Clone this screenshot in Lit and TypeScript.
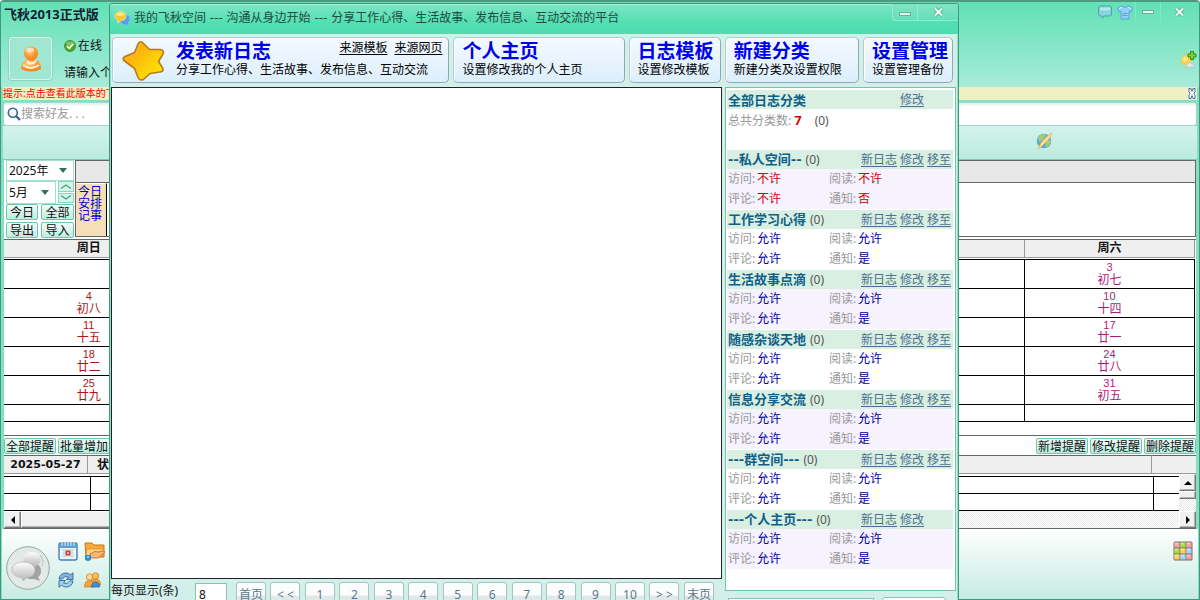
import { LitElement, html, css, svg, nothing } from "lit";
import { customElement, property } from "lit/decorators.js";
import { classMap } from "lit/directives/class-map.js";

const base = css`
  *, *::before, *::after { box-sizing: border-box; }
  :host {
    font: 12px/16px "Noto Sans", "Noto Sans CJK SC", sans-serif;
    color: #111;
  }
  button, input, select { font: inherit; color: inherit; margin: 0; padding: 0; border: 0; background: none; border-radius: 0; }
  button { white-space: nowrap; cursor: pointer; }
  svg { display: block; flex: none; }
  p, h1, h2 { margin: 0; font: inherit; }
`;

const starIcon = svg`<svg width="44" height="43" viewBox="0 0 44 43">
  <defs><linearGradient id="st" x1="0" y1="0" x2="1" y2="1"><stop offset="0" stop-color="#f99a08"/><stop offset=".5" stop-color="#ffc40c"/><stop offset="1" stop-color="#fff200"/></linearGradient></defs>
  <path d="M17.500 4Q19.500 1.500 22 4L28.500 10.500L39.500 10.500Q43.500 11.500 42 15L37.500 22.500L42 29.500Q42.500 33 38.500 33L29 34.500L22.500 40.500Q18.500 42 17 38.500L13.500 29.500L3 21.500Q1 19 4 17.500L13.500 13.500Z" fill="url(#st)" stroke="#b97a1a" stroke-width="1.600" stroke-linejoin="round"/>
  <path d="M19 5.500L15.500 15.500L5 19.500" fill="none" stroke="#ffb52e" stroke-width="1.800" stroke-linecap="round" stroke-linejoin="round"/></svg>`;

const bubblesIcon = svg`<svg width="17" height="16" viewBox="0 0 17 16">
  <path d="M12 4.500a4.500 4.500 0 0 1 2.500 8L15 15.500L11.500 14.800A5 4.500 0 0 1 6 11Z" fill="#4fa4ea" stroke="#8cc9f5" stroke-width=".8"/>
  <path d="M6.500 1.500c3.300 0 5.500 2 5.500 4.600s-2.200 4.700-5.500 4.700L3.500 13l.3-2.800C2 9.300 1 7.900 1 6.100C1 3.500 3.300 1.500 6.500 1.500Z" fill="#fbc52e" stroke="#e9e6a0" stroke-width=".8"/>
  <ellipse cx="6.500" cy="4.300" rx="3.600" ry="1.800" fill="#ffe999"/></svg>`;

const avatarIcon = svg`<svg width="24" height="28" viewBox="0 0 24 28">
  <defs><radialGradient id="av" cx=".4" cy=".3" r=".8"><stop offset="0" stop-color="#ffd9a0"/><stop offset=".5" stop-color="#ff9a2e"/><stop offset="1" stop-color="#f07818"/></radialGradient></defs>
  <path d="M2 24Q2 17 8 15L16 15Q22 17 22 24Q12 29 2 24Z" fill="url(#av)"/>
  <path d="M4 20Q12 26 20 20M8 16Q12 21 17 16" fill="none" stroke="#fff1df" stroke-width="1.800"/>
  <circle cx="12" cy="8.500" r="7" fill="url(#av)"/><ellipse cx="11" cy="5" rx="4" ry="2.200" fill="#ffe9c8" opacity=".8"/></svg>`;

const okIcon = svg`<svg width="12" height="12" viewBox="0 0 12 12"><circle cx="6" cy="6" r="5.500" fill="#4fa52c" stroke="#3a8a30" stroke-width=".8"/><ellipse cx="6" cy="3.500" rx="3.800" ry="2" fill="#9ad36a" opacity=".7"/><path d="M3 6.200L5.300 8.400L9.200 4" fill="none" stroke="#fff" stroke-width="1.700"/></svg>`;

const searchIcon = svg`<svg width="14" height="14" viewBox="0 0 14 14"><circle cx="5.800" cy="5.800" r="4.500" fill="#f4fafc" stroke="#35648f" stroke-width="1.600"/><path d="M9 9L13 13" stroke="#2f5c86" stroke-width="2.200"/></svg>`;

const bubbleIcon = svg`<svg width="14" height="14" viewBox="0 0 14 14"><path d="M2.500 1h9q2 0 2 2v6q0 2-2 2H6L4.500 13.300L3.500 11H2.500q-2 0-2-2V3q0-2 2-2Z" fill="#86d3dd" stroke="#4f9fae"/><path d="M2 2.500h10v3H2z" fill="#c2eef2" opacity=".7"/></svg>`;

const shirtIcon = svg`<svg width="16" height="15" viewBox="0 0 16 15"><path d="M5 1Q8 4 11 1L15.500 3L14 7L12 6V14H4V6L2 7L.5 3Z" fill="#8fd0f6" stroke="#5aa2d8"/><path d="M2 3.500L5 2.300M14 3.500L11 2.300" stroke="#e8f7ff"/><path d="M5.500 8.500h5M5.500 10.500h5" stroke="#5d9fd0"/></svg>`;

const closeIcon = svg`<svg width="11" height="10" viewBox="0 0 11 10"><path d="M2 1.500L9 8.500M9 1.500L2 8.500" stroke="#4c9f85" stroke-width="3.600"/><path d="M2 1.500L9 8.500M9 1.500L2 8.500" stroke="#edfbf5" stroke-width="2.200"/></svg>`;

const minIcon = svg`<svg width="12" height="4" viewBox="0 0 12 4"><rect x=".5" y=".5" width="11" height="3" fill="#e6f7f0" stroke="#6fae99"/></svg>`;

const weatherIcon = svg`<svg width="19" height="19" viewBox="0 0 19 19"><path d="M8 2v3M8 15v3M1 10h3M3 5l2 2M3 15l2-2M13 15l1 2" stroke="#e8c54a"/><circle cx="8.500" cy="10.500" r="5" fill="#fbd04a"/><circle cx="7.500" cy="9" r="2.500" fill="#ffe58a"/><path d="M8 17q-1-3 2-3q2-3 4 0q3 0 2 3Z" fill="#e6e9ea" stroke="#b3bcbe" stroke-width=".6"/><path d="M12.500 1.500h3v2.500h2.500v3h-2.500v2.500h-3v-2.500H10V4h2.500Z" fill="#7dcf2f" stroke="#2f8a1a"/></svg>`;

const globeIcon = svg`<svg width="17" height="18" viewBox="0 0 17 18"><circle cx="8" cy="9" r="7.300" fill="#5ea8d8"/><path d="M2.500 5Q6 1 10 2.500L8 6L4 10Q1.500 8 2.500 5ZM11 9L15 8Q15 13 10 15.500Q8.500 12 11 9Z" fill="#a3cf72"/><path d="M2.500 17Q4 9 15.500 1Q16.500 3 11 9Q6 14 2.500 17Z" fill="#ffe0a0" stroke="#f0b24c" stroke-width=".8"/></svg>`;

const chatIcon = svg`<svg width="44" height="46" viewBox="0 0 44 46">
  <defs><linearGradient id="cg" x1="0" y1="0" x2="0" y2="1"><stop offset="0" stop-color="#fff"/><stop offset="1" stop-color="#b4b4b4"/></linearGradient></defs>
  <circle cx="22" cy="23" r="21.300" fill="#e2eae8" stroke="#9aa5a1"/>
  <path d="M27 17q8 2 8 9q0 4-3 6l2 4-6-2q-9 1-12-5Z" fill="#a2a2a2"/>
  <ellipse cx="26" cy="14.500" rx="9" ry="7.500" fill="url(#cg)"/>
  <path d="M17 17c7 0 12 3.500 12 8s-4 7.500-9 7.800L17.500 36L15 32.500C9 31.500 6 28.500 6 25C6 20.500 10 17 17 17Z" fill="url(#cg)" stroke="#b5b5b5" stroke-width=".8"/>
  <path d="M34 10q5 5 2 11" fill="none" stroke="#c9d0ce" stroke-width="1.500"/></svg>`;

const calendarIcon = svg`<svg width="20" height="20" viewBox="0 0 20 20"><rect x="1" y="2" width="18" height="17" rx="2" fill="#eef6fc" stroke="#3f7fb4" stroke-width="1.400"/><path d="M1 3h18v4H1z" fill="#5b9fd6"/><path d="M4 1v4M7 1v4M10 1v4M13 1v4M16 1v4" stroke="#dff0fb"/><path d="M4 9h12M4 12h12M4 15h12M6 8v9M14 8v9" stroke="#bdd6ea"/><rect x="7.500" y="9.500" width="5" height="5" fill="#d23b2e"/><rect x="9.200" y="11.200" width="1.600" height="1.600" fill="#fff"/></svg>`;

const folderIcon = svg`<svg width="22" height="20" viewBox="0 0 22 20"><path d="M1 2h7l2 2h10v12H2Z" fill="#f6a93d" stroke="#c97813"/><path d="M3 8h17l-3 8H2Z" fill="#ffd27c" stroke="#dd8f2a" stroke-width=".8"/><path d="M6 13q5-4 8-2l6-1q2 1-1 3l-5 4H7Z" fill="#f9b478" stroke="#c06a20" stroke-width=".8"/><path d="M1 14h6v5q-3 2-6 0Z" fill="#2f8fd6"/><path d="M3 16h2" stroke="#fff"/></svg>`;

const syncIcon = svg`<svg width="16" height="16" viewBox="0 0 16 16"><path d="M1 7Q2 1 8 1Q10.500 1 12.500 2.800L15 .8V7.500H8.500L10.500 5Q6.500 3 4.500 7Z" fill="#7fb6e2" stroke="#2f6496" stroke-width=".9"/><path d="M15 9Q14 15 8 15Q5.500 15 3.500 13.200L1 15.200V8.500H7.500L5.500 11Q9.500 13 11.500 9Z" fill="#a6cfee" stroke="#2f6496" stroke-width=".9"/></svg>`;

const usersIcon = svg`<svg width="17" height="16" viewBox="0 0 17 16"><circle cx="11.500" cy="4" r="3.200" fill="#ffbe57" stroke="#c77912" stroke-width=".7"/><path d="M6.500 13q0-6 5-6t5 6Z" fill="#f5a02a" stroke="#c77912" stroke-width=".7"/><circle cx="5.500" cy="5" r="3.200" fill="#ffd79a" stroke="#c77912" stroke-width=".7"/><path d="M.5 15q0-6.500 5-6.500t5 6.500Z" fill="#f2a53a" stroke="#c77912" stroke-width=".7"/><path d="M7.500 15q0-5 4-5t4 5Z" fill="#3c8fdc" stroke="#1f5fa3" stroke-width=".7"/></svg>`;

const palette = ["#f0a0a8", "#a5d84a", "#f0a0a8", "#a5d84a", "#f7cf5a", "#9fd4f2", "#f7cf5a", "#9fd4f2", "#f0a0a8"];
const appsIcon = svg`<svg width="20" height="20" viewBox="0 0 20 20"><rect x=".5" y=".5" width="19" height="19" rx="1.500" fill="#7d6f5c"/>
  ${palette.map((c, i) => svg`<rect x=${1.2 + (i % 3) * 6} y=${1.2 + Math.floor(i / 3) * 6} width="5.400" height="5.400" rx=".6" fill=${c}/><rect x=${2 + (i % 3) * 6} y=${2 + Math.floor(i / 3) * 6} width="3" height="1.500" fill="#fff" opacity=".45"/>`)}</svg>`;

const tri = (d: string) => svg`<svg width="8" height="8" viewBox="0 0 8 8"><path d=${d} fill="#000"/></svg>`;
const triDown = svg`<svg class="caret" width="8" height="5" viewBox="0 0 8 5"><path d="M0 0H8L4 5Z" fill="#2e7058"/></svg>`;
const chevron = (d: string) => svg`<svg width="10" height="5" viewBox="0 0 10 5"><path d=${d} fill="none" stroke="#4a9c84" stroke-width="1.200"/></svg>`;

type Day = [string, string] | null;
const weeks: { sun: Day; sat: Day }[] = [
  { sun: null, sat: ["3", "初七"] },
  { sun: ["4", "初八"], sat: ["10", "十四"] },
  { sun: ["11", "十五"], sat: ["17", "廿一"] },
  { sun: ["18", "廿二"], sat: ["24", "廿八"] },
  { sun: ["25", "廿九"], sat: ["31", "初五"] },
];

@customElement("planner-window")
export class PlannerWindow extends LitElement {
  static styles = [base, css`
    :host {
      display: flex; flex-direction: column; height: 100%;
      border: 1px solid #3d9a7c; border-top: 2px solid #4d9a80; border-radius: 4px 4px 0 0;
      padding: 0 3px; background: #86dfc2; overflow: hidden;
    }
    .head { height: 85px; margin: 0 -3px; padding: 0 2px; background: linear-gradient(#62e1b5, #a8ebd9); display: flex; flex-direction: column; }
    .bar { display: flex; align-items: flex-start; height: 35px; }
    .bar h1 { flex: 1; font-size: 13px; line-height: 24px; font-weight: 700; padding-left: 1px; color: #123; }
    .bar button { height: 20px; display: grid; place-items: center; }
    .tool { width: 20px; }
    .min, .close { border-left: 1px solid #7fe9c6; }
    .min { width: 25px; }
    .close { width: 37px; }
    .who { display: flex; align-items: flex-start; padding-left: 6px; }
    .avatar { width: 43px; height: 43px; display: grid; place-items: center; border: 1px solid #d6f6ec; border-radius: 3px; background: #a0e6d0; box-shadow: 0 0 0 1px #8bd6bd; }
    .lines { flex: 1; padding: 0 0 0 12px; }
    .online { display: flex; align-items: center; gap: 2px; height: 18px; }
    .sign { margin-top: 10px; }
    .weather { padding-top: 13px; }
    .tip { display: flex; justify-content: space-between; height: 13px; margin: 0 -1px; background: #f0f0c4; color: #f00; font-size: 10px; line-height: 13px; flex: none; }
    .tip button { width: 8px; margin-right: 1px; }
    .search { display: flex; align-items: center; height: 24px; margin: 2px -1px 0; padding: 0 3px; border: 1px solid #a5d5d0; border-radius: 3px; background: #fff; box-shadow: inset 0 2px 2px #e3f1f3; flex: none; }
    .search input { flex: 1; min-width: 0; outline: 0; }
    .search input::placeholder { color: #999; opacity: 1; }
    .strip { height: 34px; flex: none; margin: 0 -1px; background: linear-gradient(#d3f3ea, #bbecdd); border-bottom: 1px solid #8ac5b3; display: flex; justify-content: flex-end; align-items: flex-start; padding: 6px 144px 0 0; }
    .body { flex: 1; background: #fff; display: flex; flex-direction: column; min-height: 0; }
    .plan { display: flex; height: 77px; }
    .pick { width: 71px; padding: 0 1px 0 2px; display: grid; grid-template-columns: 32px 1fr; column-gap: 3px; grid-template-rows: 21px 23px 18px 16px; }
    .combo { display: grid; align-items: center; border: 1px solid #a5dfcd; }
    .combo > * { grid-area: 1 / 1; }
    .combo select { appearance: none; width: 100%; height: 100%; padding-left: 2px; outline: 0; }
    .caret { justify-self: end; margin-right: 6px; pointer-events: none; }
    .year { grid-column: 1 / 3; }
    .month { grid-column: 1 / 3; display: grid; grid-template-columns: 1fr 16px; column-gap: 2px; }
    .spin { display: grid; grid-template-rows: 1fr 1fr; row-gap: 1px; padding-bottom: 1px; }
    .spin button { display: grid; place-items: center; border: 1px solid #8ad3bd; background: #d6f3ea; }
    .btn { height: 16px; line-height: 15px; border: 1px solid #6cc7ab; border-radius: 2px; background: linear-gradient(#f3fcf9, #c0eadf); text-align: center; }
    .memo { flex: 1; border: 1px solid #666; display: grid; grid-template-rows: 22px 1fr; }
    .memo-head { background: #e8e8e8; border-bottom: 1px solid #666; }
    .today { width: 31px; background: #f5dfb8; border-right: 1px solid #000; border-top: 1px solid #fff; color: #00c; padding: 2px 2px 0 2px; line-height: 12px; }
    table { width: 100%; border-collapse: collapse; table-layout: fixed; }
    td, th { padding: 0; }
    .cal-wrap { margin-top: 2px; height: 198px; padding-right: 1px; border-top: 1px solid #666; border-bottom: 1px solid #666; }
    .cal th { height: 17px; background: #efefef; border-right: 1px solid #999; border-bottom: 1px solid #999; font-weight: 700; }
    .cal .gap td { height: 2px; border: 0; }
    .cal .week td { height: 29px; }
    .cal .last td { height: 17px; }
    .cal .week td, .cal .last td { border: 1px solid #000; text-align: center; line-height: 12px; color: #b01414; }
    .cal td.sat { color: #b01a78; }
    .num { display: block; font-family: "Liberation Sans", sans-serif; font-size: 11px; line-height: 11px; }
    .cal tr td:first-child { border-left: 0; }
    .lunar { display: block; line-height: 13px; }
    .acts { display: flex; gap: 2px; height: 19px; align-items: center; }
    .acts .btn { width: 52px; }
    .push { margin-left: auto; }
    .list { display: grid; grid-template-columns: 1fr 17px; border-top: 1px solid #666; border-bottom: 1px solid #666; }
    .list-head { grid-column: 1 / 3; display: grid; grid-template-columns: 84px 1fr 44px; height: 18px; background: #efefef; border-bottom: 1px solid #999; }
    .list-head span { border-right: 1px solid #999; font-weight: 700; line-height: 18px; }
    .date { font-family: "DejaVu Sans", sans-serif; font-size: 11px; text-align: center; }
    .state { padding-left: 9px; }
    .rows { margin-top: 2px; }
    .rows td { height: 17px; border: 1px solid #000; }
    .rows td:first-child { width: 86px; border-left: 0; }
    .rows td:last-child { width: 26px; border-right: 0; }
    .vs { display: grid; grid-template-rows: 17px 8px 1fr; background: repeating-conic-gradient(#e8e8e8 0 25%, #fff 0 50%) 0 0 / 2px 2px; }
    .hs { display: grid; grid-template-columns: 17px 70% 1fr 17px; grid-column: 1 / 3; height: 17px; background: repeating-conic-gradient(#e8e8e8 0 25%, #fff 0 50%) 0 0 / 2px 2px; }
    .knob { display: grid; place-items: center; background: #f0f0f0; border: 1px solid #fff; border-right-color: #777; border-bottom-color: #777; box-shadow: inset -1px -1px #b5b5b5; }
    .foot { height: 70px; flex: none; margin: 0 -2px; padding: 12px 5px 0 4px; display: flex; align-items: flex-start; background: linear-gradient(#fff, #c6ece2); }
    .foot button { display: grid; place-items: center; }
    .chat { margin-top: 4px; }
    .quick { display: grid; grid-template-columns: 22px 22px; column-gap: 4px; row-gap: 11px; margin-left: 8px; align-items: center; justify-items: start; }
    .apps { margin-left: auto; }
  `];

  private day(d: Day) {
    return d ? html`<span class="num">${d[0]}</span><span class="lunar">${d[1]}</span>` : nothing;
  }

  render() {
    const blanks = (n: number) => Array.from({ length: n }, () => html`<td></td>`);
    return html`
      <header class="head">
        <div class="bar">
          <h1>飞秋2013正式版</h1>
          <button class="tool" aria-label="消息">${bubbleIcon}</button>
          <button class="tool" aria-label="皮肤">${shirtIcon}</button>
          <button class="min" aria-label="最小化">${minIcon}</button>
          <button class="close" aria-label="关闭">${closeIcon}</button>
        </div>
        <div class="who">
          <div class="avatar">${avatarIcon}</div>
          <div class="lines">
            <div class="online">${okIcon}<span>在线</span></div>
            <p class="sign">请输入个</p>
          </div>
          <div class="weather">${weatherIcon}</div>
        </div>
      </header>
      <div class="tip"><span>提示:点击查看此版本的下</span>
        <button aria-label="关闭提示"><svg width="8" height="11" viewBox="0 0 8 11"><path d="M1 .5h2l1 3l1-3h2v3L6 5.500l1 2v3H5l-1-3l-1 3H1v-3l1-2l-1-2Z" fill="#fff" stroke="#3c6ea8"/></svg></button>
      </div>
      <label class="search">${searchIcon}<input type="text" placeholder="搜索好友. . ." aria-label="搜索好友"></label>
      <div class="strip">${globeIcon}</div>
      <main class="body">
        <section class="plan">
          <div class="pick">
            <div class="combo year"><select aria-label="年"><option>2025年</option></select>${triDown}</div>
            <div class="month">
              <div class="combo"><select aria-label="月"><option>5月</option></select>${triDown}</div>
              <div class="spin">
                <button aria-label="上个月">${chevron("M0 4.500L5 1L10 4.500")}</button>
                <button aria-label="下个月">${chevron("M0 .5L5 4L10 .5")}</button>
              </div>
            </div>
            ${["今日", "全部", "导出", "导入"].map((t) => html`<button class="btn">${t}</button>`)}
          </div>
          <div class="memo"><div class="memo-head"></div><div class="today">今日安排记事</div></div>
        </section>
        <div class="cal-wrap">
          <table class="cal">
            <thead><tr><th>周日</th><th></th><th></th><th></th><th></th><th></th><th>周六</th></tr></thead>
            <tbody>
              <tr class="gap">${blanks(7)}</tr>
              ${weeks.map((w) => html`<tr class="week"><td>${this.day(w.sun)}</td>${blanks(5)}<td class="sat">${this.day(w.sat)}</td></tr>`)}
              <tr class="last">${blanks(7)}</tr>
            </tbody>
          </table>
        </div>
        <div class="acts">
          <button class="btn">全部提醒</button><button class="btn">批量增加</button>
          <button class="btn push">新增提醒</button><button class="btn">修改提醒</button><button class="btn">删除提醒</button>
        </div>
        <section class="list">
          <div class="list-head"><span class="date">2025-05-27</span><span class="state">状</span></div>
          <table class="rows"><tbody><tr>${blanks(3)}</tr><tr>${blanks(3)}</tr></tbody></table>
          <div class="vs"><button class="knob" aria-label="向上">${tri("M0 6H8L4 2Z")}</button><div class="knob"></div></div>
          <div class="hs"><button class="knob" aria-label="向左">${tri("M6 0V8L2 4Z")}</button><div class="knob"></div><span></span><button class="knob" aria-label="向右">${tri("M2 0V8L6 4Z")}</button></div>
        </section>
      </main>
      <footer class="foot">
        <button class="chat" aria-label="群聊">${chatIcon}</button>
        <div class="quick">
          <button aria-label="日程">${calendarIcon}</button><button aria-label="共享">${folderIcon}</button>
          <button aria-label="刷新">${syncIcon}</button><button aria-label="联系人">${usersIcon}</button>
        </div>
        <button class="apps" aria-label="应用">${appsIcon}</button>
      </footer>`;
  }
}

@customElement("category-card")
export class CategoryCard extends LitElement {
  @property() name = "";
  @property({ type: Array }) links: string[] = [];
  @property({ type: Array }) values: string[] = [];
  @property({ type: Boolean }) shaded = false;

  static styles = [base, css`
    :host { display: block; padding-bottom: 1px; }
    .head { display: flex; height: 19px; align-items: center; background: #d9efe1; padding: 0 2px 0 1px; color: #555; }
    .name { font-family: "DejaVu Sans", "Noto Sans CJK SC", sans-serif; font-size: 13px; font-weight: 700; color: #0f5f88; margin-right: 4px; }
    .count { flex: 1; }
    .links { display: grid; grid-template-columns: 36px 24px 24px; column-gap: 3px; }
    a { color: #4d6f92; text-underline-offset: 2px; }
    .perms { display: grid; grid-template-columns: 101px 1fr; padding: 0 1px; line-height: 20px; }
    .shaded { background: #f6f2fe; }
    .key { display: inline-block; width: 29px; color: #999; }
    .yes { color: #00009c; }
    .no { color: #c00; }
  `];

  render() {
    const keys = ["访问", "阅读", "评论", "通知"];
    return html`
      <div class="head">
        <span class="name">${this.name}</span><span class="count">(0)</span>
        <nav class="links">${this.links.map((t) => html`<a href="#">${t}</a>`)}</nav>
      </div>
      <div class=${classMap({ perms: true, shaded: this.shaded })}>
        ${keys.map((k, i) => {
          const v = this.values[i];
          const denied = v === "不许" || v === "否";
          return html`<div><span class="key">${k}:</span><span class=${denied ? "no" : "yes"}>${v}</span></div>`;
        })}
      </div>`;
  }
}

const allowed = ["允许", "允许", "允许", "是"];
const full = ["新日志", "修改", "移至"];
const categories = [
  { name: "--私人空间--", links: full, values: ["不许", "不许", "不许", "否"] },
  { name: "工作学习心得", links: full, values: allowed },
  { name: "生活故事点滴", links: full, values: allowed },
  { name: "随感杂谈天地", links: full, values: allowed },
  { name: "信息分享交流", links: full, values: allowed },
  { name: "---群空间---", links: full, values: allowed },
  { name: "---个人主页---", links: ["新日志", "修改"], values: allowed },
];

@customElement("space-window")
export class SpaceWindow extends LitElement {
  static styles = [base, css`
    :host {
      display: flex; flex-direction: column; overflow: hidden;
      border: 1px solid #3d9a7c; border-bottom: 0; border-radius: 4px 4px 0 0;
      background: #d3efe9; box-shadow: inset 1px 0 #8fe0c6, inset -1px 0 #8fe0c6;
    }
    .bar { display: flex; align-items: flex-start; height: 30px; flex: none; padding-left: 4px; background: linear-gradient(#7de6c5, #54dfb1 60%, #4edcae); box-shadow: inset 0 1px #a5efd8; }
    .bar h1 { flex: 1; display: flex; align-items: center; gap: 3px; font-family: "DejaVu Sans", "Noto Sans CJK SC", sans-serif; line-height: 28px; color: #1d4a40; white-space: nowrap; }
    .ctl { display: flex; height: 17px; border: 1px solid #8feccf; border-top: 0; border-right: 0; border-radius: 0 0 0 4px; background: linear-gradient(#7fe5c5, #66dfb8); }
    .ctl button { display: grid; place-items: center; }
    .min { width: 25px; border-right: 1px solid #8feccf; padding-top: 4px; }
    .close { width: 40px; }
    .cards { display: grid; grid-template-columns: 337fr 171fr 92fr 134fr 90fr; gap: 4px; padding: 3px 5px 4px 2px; flex: none; }
    .card { position: relative; display: flex; height: 46px; min-width: 0; padding-left: 8px; border: 1px solid #b5c9d6; border-right-color: #8fa9b6; border-bottom-color: #8fa9b6; border-radius: 5px; background: linear-gradient(#f4f9ff, #dceffd); box-shadow: inset 1px 1px #fff; white-space: nowrap; }
    .first { gap: 11px; align-items: center; }
    .text { display: flex; flex-direction: column; flex: 1; align-self: stretch; padding-top: 2px; }
    .card h2 { font-size: 19px; line-height: 22px; font-weight: 700; color: #0000e8; }
    .card p { line-height: 15px; color: #000; }
    .src { position: absolute; right: 6px; top: 2px; display: flex; gap: 7px; }
    .src a { color: #000; text-underline-offset: 2px; }
    .work { flex: 1; min-height: 0; display: grid; grid-template-columns: 1fr 231px; column-gap: 3px; padding: 0 2px 0 1px; }
    .left, .right { display: flex; flex-direction: column; min-height: 0; min-width: 0; }
    .page { flex: 1; background: #fff; border: 1px solid #222; }
    .pager { display: flex; height: 21px; flex: none; overflow: hidden; }
    .pager label { width: 84px; line-height: 24px; color: #111; }
    .size { width: 32px; height: 22px; margin-top: 4px; padding-left: 3px; border: 1px solid #7cc8b2; background: #fff; }
    .pages { flex: 1; display: flex; justify-content: space-between; padding: 3px 8px 0 9px; }
    .pages button { width: 30px; height: 26px; line-height: 24px; border: 1px solid #a5c5bf; border-radius: 3px; background: linear-gradient(#fafdfc 50%, #dfe9e8 55%); color: #5a7890; flex: none; }
    .side { flex: 1; min-height: 0; background: #fff; border: 1px solid #74c3ab; padding: 2px 2px 0 1px; overflow: hidden; }
    .all { height: 60px; }
    .all-head { display: flex; justify-content: space-between; align-items: center; height: 19px; background: #d9efe1; padding: 0 29px 0 1px; }
    .all-head b { font-size: 13px; color: #0f5f88; }
    .all-head a { color: #4d6f92; text-underline-offset: 2px; }
    .sum { padding-left: 1px; line-height: 22px; color: #999; }
    .sum b { font-size: 13px; color: #d00; margin: 0 13px 0 3px; }
    .sum span { color: #555; }
    .find { display: flex; gap: 8px; height: 9px; flex: none; padding: 6px 10px 0 3px; overflow: hidden; }
    .find input { flex: 1; min-width: 0; height: 22px; margin-top: 1px; border: 1px solid #7cc8b2; background: #fff; }
    .find button { width: 64px; height: 22px; border: 1px solid #7cc8b2; border-radius: 3px; background: #fff; }
  `];

  render() {
    const pages = ["首页", "< <", "1", "2", "3", "4", "5", "6", "7", "8", "9", "10", "> >", "末页"];
    const card = (title: string, note: string) => html`
      <article class="card"><div class="text"><h2>${title}</h2><p>${note}</p></div></article>`;
    return html`
      <header class="bar">
        <h1>${bubblesIcon}我的飞秋空间 --- 沟通从身边开始 --- 分享工作心得、生活故事、发布信息、互动交流的平台</h1>
        <div class="ctl"><button class="min" aria-label="最小化">${minIcon}</button><button class="close" aria-label="关闭">${closeIcon}</button></div>
      </header>
      <div class="cards">
        <article class="card first">${starIcon}
          <div class="text"><h2>发表新日志</h2><p>分享工作心得、生活故事、发布信息、互动交流</p></div>
          <nav class="src"><a href="#">来源模板</a><a href="#">来源网页</a></nav>
        </article>
        ${card("个人主页", "设置修改我的个人主页")}
        ${card("日志模板", "设置修改模板")}
        ${card("新建分类", "新建分类及设置权限")}
        ${card("设置管理", "设置管理备份")}
      </div>
      <div class="work">
        <div class="left">
          <div class="page"></div>
          <div class="pager">
            <label for="size">每页显示(条)</label><input class="size" id="size" type="text" value="8">
            <nav class="pages">${pages.map((p) => html`<button>${p}</button>`)}</nav>
          </div>
        </div>
        <aside class="right">
          <div class="side">
            <div class="all">
              <div class="all-head"><b>全部日志分类</b><a href="#">修改</a></div>
              <div class="sum">总共分类数:<b>7</b><span>(0)</span></div>
            </div>
            ${categories.map((c, i) => html`<category-card .name=${c.name} .links=${c.links} .values=${c.values} .shaded=${i % 2 === 0}></category-card>`)}
          </div>
          <div class="find"><input type="text" aria-label="查找日志"><button aria-label="查找"></button></div>
        </aside>
      </div>`;
  }
}

@customElement("app-root")
export class AppRoot extends LitElement {
  static styles = css`
    :host { display: block; position: relative; height: 100vh; overflow: hidden; }
    planner-window { box-sizing: border-box; }
    space-window { box-sizing: border-box; position: absolute; left: 109px; right: 241px; top: 3px; bottom: 0; }
  `;
  render() {
    return html`<planner-window></planner-window><space-window></space-window>`;
  }
}
